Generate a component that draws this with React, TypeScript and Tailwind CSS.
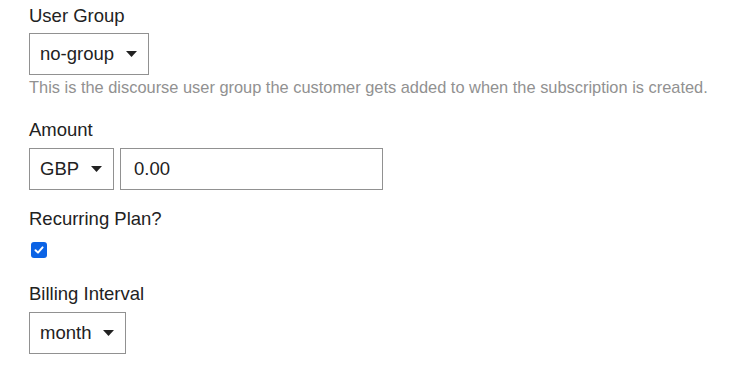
import React from "react";

function Caret() {
  return (
    <svg width="11" height="6" viewBox="0 0 11 6" className="ml-[12px] shrink-0">
      <path d="M0 0 L11 0 L5.5 6 Z" fill="#222222" />
    </svg>
  );
}

function SelectBox({ value }: { value: string }) {
  return (
    <div className="inline-flex items-center h-[42px] border border-[#919191] bg-white pl-[10px] pr-[11px] text-[18.5px] text-[#222222]">
      <span>{value}</span>
      <Caret />
    </div>
  );
}

export default function App() {
  return (
    <div
      className="w-[743px] h-[375px] bg-white pl-[29px] text-[#222222] overflow-hidden"
      style={{ fontFamily: '"Liberation Sans", Arial, sans-serif' }}
    >
      <div className="pt-[4px]">
        <label className="block text-[18.5px] leading-[24px] mb-[5px]">User Group</label>
        <SelectBox value="no-group" />
        <p className="text-[16.4px] leading-[20px] text-[#919191] mt-[2px]">
          This is the discourse user group the customer gets added to when the subscription is created.
        </p>
      </div>

      <div className="mt-[21px]">
        <label className="block text-[18.5px] leading-[24px] mb-[6px]">Amount</label>
        <div className="flex items-center gap-[6px]">
          <SelectBox value="GBP" />
          <input
            type="text"
            defaultValue="0.00"
            className="w-[263px] h-[42px] border border-[#919191] px-[13px] text-[18.5px] text-[#222222] outline-none"
            style={{ fontFamily: '"Liberation Sans", Arial, sans-serif' }}
          />
        </div>
      </div>

      <div className="mt-[17px]">
        <label className="block text-[18.5px] leading-[24px] mb-[11px]">Recurring Plan?</label>
        <div className="ml-[2px] w-[16px] h-[16px] rounded-[3px] bg-[#0b63e5] flex items-center justify-center">
          <svg width="12" height="12" viewBox="0 0 12 12">
            <path d="M2.5 6.2 L5 8.6 L9.6 3.4" stroke="white" strokeWidth="2" fill="none" strokeLinecap="round" strokeLinejoin="round" />
          </svg>
        </div>
      </div>

      <div className="mt-[24px]">
        <label className="block text-[18.5px] leading-[24px] mb-[6px]">Billing Interval</label>
        <SelectBox value="month" />
      </div>
    </div>
  );
}
